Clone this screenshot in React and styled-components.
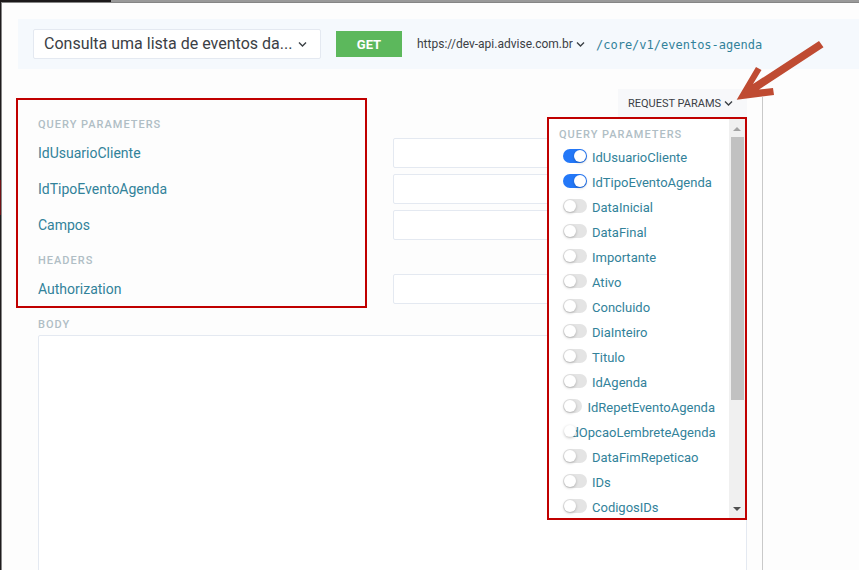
import React, { useState } from "react";
import styled, { createGlobalStyle } from "styled-components";

const GlobalStyle = createGlobalStyle`
  *, *::before, *::after { box-sizing: border-box; }
  body { margin: 0; font-family: Roboto, "Liberation Sans", sans-serif; color: #3b4045; }
  button, input, select, textarea { font: inherit; color: inherit; margin: 0; }
`;

const Backdrop = styled.div`
  display: flex;
  height: 100vh;
  overflow: hidden;
  padding: 2px 0 0 1px;
  background:
    linear-gradient(90deg, #1c191a 111px, #999 111px) top / 100% 2px no-repeat,
    linear-gradient(#1f1c1d 180px, #6e1014 180px 215px, #1f1c1d 215px);
`;

const Dialog = styled.div`
  flex: 1;
  min-width: 0;
  display: flex;
  flex-direction: column;
  padding: 16px 0 0 16px;
  border: solid #858585;
  border-width: 1px 0 0 1px;
  background: #fdfdfd;
`;

const RequestBar = styled.header`
  display: flex;
  align-items: center;
  flex: none;
  height: 50px;
  padding-left: 15px;
  background: #f5f9fd;
`;

const SelectWrap = styled.div`
  display: flex;
  align-items: center;
  flex: none;
  gap: 2px;
`;

const EndpointWrap = styled(SelectWrap)`
  width: 288px;
  height: 30px;
  padding: 0 12px 0 10px;
  border: 1px solid #e4e9f1;
  border-radius: 2px;
  background: #fff;
`;

const PlainSelect = styled.select`
  appearance: none;
  flex: 1;
  min-width: 0;
  padding: 0;
  border: 0;
  outline: 0;
  background: transparent;
  font-size: ${(p) => p.$size}px;
  line-height: 20px;
`;

const Method = styled.button`
  flex: none;
  width: 66px;
  height: 26px;
  margin: 0 15px;
  padding: 0;
  border: 0;
  background: #5cb85c;
  color: #fff;
  font-size: 13px;
  font-weight: 700;
`;

const Path = styled.code`
  margin: 2px 0 0 10px;
  color: #32829a;
  font: 12px "DejaVu Sans Mono", monospace;
`;

const Columns = styled.div`
  flex: 1;
  min-height: 0;
  display: grid;
  grid-template-columns: minmax(0, 1fr) 97px;
  padding-top: 20px;
`;

const Form = styled.main`
  position: relative;
  min-width: 0;
  padding: 0 15px 0 20px;
`;

const Response = styled.aside`
  margin-top: 8px;
  border-left: 1px solid #c9c9c9;
`;

const FormTop = styled.div`
  display: flex;
  justify-content: space-between;
  align-items: flex-start;
  height: 42px;
`;

const Heading = styled.h2`
  margin: 0;
  padding-top: ${(p) => p.$top || 0}px;
  color: #b0bec5;
  font-size: 11px;
  font-weight: 500;
  line-height: 12px;
  letter-spacing: 1px;
  text-transform: uppercase;
`;

const Fields = styled.div`
  display: grid;
  gap: 6px;
  padding-top: 7px;
`;

const Field = styled.label`
  display: grid;
  grid-template-columns: 1fr 1fr;
  align-items: center;
  color: #32829a;
  font-size: 14px;
`;

const TextBox = styled.input`
  width: 100%;
  height: 30px;
  padding: 0 8px;
  border: 1px solid #e4e9f1;
  border-radius: 2px;
  background: #fff;
`;

const Body = styled.textarea`
  display: block;
  width: 100%;
  height: 300px;
  margin-top: 4px;
  border: 1px solid #e4e9f1;
  border-radius: 2px;
  background: #fff;
  resize: none;
`;

const Highlight = styled.div`
  position: absolute;
  top: 9px;
  left: -2px;
  width: calc(50% - 21px);
  height: 210px;
  border: 2px solid #c00000;
  pointer-events: none;
`;

const Menu = styled.div`
  position: relative;
  width: 129px;
`;

const MenuButton = styled.button`
  display: flex;
  align-items: center;
  gap: 2px;
  width: 100%;
  height: 28px;
  padding: 0 0 0 10px;
  border: 0;
  background: #f7f8fa;
  font-size: 11px;
  white-space: nowrap;
`;

const Popover = styled.div`
  position: absolute;
  z-index: 1;
  top: 100%;
  right: 0;
  display: flex;
  width: 200px;
  height: 403px;
  border: 2px solid #c00000;
  background: #fff;
`;

const ParamList = styled.div`
  flex: 1;
  min-width: 0;
  overflow-y: auto;
  scrollbar-width: none;
  padding: 10px 14px 0 10px;
`;

const Params = styled.ul`
  list-style: none;
  margin: 4px 0 0;
  padding: 0 0 0 4px;
`;

const Param = styled.label`
  display: flex;
  align-items: center;
  gap: 5px;
  height: 25px;
  color: #32829a;
  font-size: 13px;
`;

const Switch = styled.input`
  appearance: none;
  position: relative;
  flex: 0 1 24px;
  min-width: 0;
  height: 14px;
  margin-bottom: 3px;
  border-radius: 7px;
  background: #e4e4e4;

  &::before {
    content: "";
    position: absolute;
    top: 1px;
    left: 1px;
    width: 12px;
    height: 12px;
    border-radius: 50%;
    background: #fff;
    box-shadow: 0 1px 3px rgba(0, 0, 0, 0.25);
  }
  &:checked { background: #2478f8; }
  &:checked::before { left: auto; right: 1px; }
`;

const ScrollBar = styled.div`
  display: flex;
  flex-direction: column;
  align-items: center;
  flex: none;
  width: 16px;
  background: #f0f0f0;
`;

const ScrollArrow = styled.svg`
  flex: none;
  width: 16px;
  height: 18px;
`;

const ScrollTrack = styled.div`
  flex: 1;
  width: 13px;
`;

const ScrollThumb = styled.div`
  height: 263px;
  background: #c1c1c1;
`;

const Pointer = styled.svg`
  position: absolute;
  z-index: 2;
  top: -49px;
  right: -77px;
  width: 88px;
  height: 61px;
  pointer-events: none;
`;

const ChevronSvg = styled.svg`
  flex: none;
  width: 11px;
  height: 10px;
  pointer-events: none;
`;

const Chevron = () => (
  <ChevronSvg viewBox="0 0 11 10" fill="none" stroke="#3b4045" strokeWidth="1.4" aria-hidden="true">
    <path d="M2 3.5 5.5 7 9 3.5" />
  </ChevronSvg>
);

const queryFields = ["IdUsuarioCliente", "IdTipoEventoAgenda", "Campos"];
const params = [
  "IdUsuarioCliente", "IdTipoEventoAgenda", "DataInicial", "DataFinal", "Importante",
  "Ativo", "Concluido", "DiaInteiro", "Titulo", "IdAgenda", "IdRepetEventoAgenda",
  "IdOpcaoLembreteAgenda", "DataFimRepeticao", "IDs", "CodigosIDs",
];

function TextField({ name }) {
  return (
    <Field>
      {name}
      <TextBox type="text" name={name} />
    </Field>
  );
}

function ParamsMenu() {
  const [open, setOpen] = useState(true);
  const [enabled, setEnabled] = useState(params.slice(0, 2));
  const toggle = (name) =>
    setEnabled((now) => (now.includes(name) ? now.filter((n) => n !== name) : [...now, name]));

  return (
    <Menu>
      <MenuButton type="button" aria-expanded={open} onClick={() => setOpen(!open)}>
        REQUEST PARAMS <Chevron />
      </MenuButton>
      {open && (
        <Popover>
          <ParamList>
            <Heading>Query Parameters</Heading>
            <Params>
              {params.map((name) => (
                <li key={name}>
                  <Param>
                    <Switch type="checkbox" checked={enabled.includes(name)} onChange={() => toggle(name)} />
                    {name}
                  </Param>
                </li>
              ))}
            </Params>
          </ParamList>
          <ScrollBar aria-hidden="true">
            <ScrollArrow viewBox="0 0 16 18"><path d="M4 12 8 8l4 4z" fill="#a3a3a3" /></ScrollArrow>
            <ScrollTrack><ScrollThumb /></ScrollTrack>
            <ScrollArrow viewBox="0 0 16 18"><path d="m4 7 4 4 4-4z" fill="#505050" /></ScrollArrow>
          </ScrollBar>
        </Popover>
      )}
      <Pointer viewBox="736 40 88 61" aria-hidden="true">
        <path d="M736.7 99.7 756 67l5.5 3-8.5 14L819 41l4.5 6.2L759 89.5 773 88l1 7z" fill="#bf4b32" />
      </Pointer>
    </Menu>
  );
}

export default function App() {
  return (
    <Backdrop>
      <GlobalStyle />
      <Dialog>
        <RequestBar>
          <EndpointWrap>
            <PlainSelect $size={16} aria-label="Endpoint">
              <option>Consulta uma lista de eventos da...</option>
            </PlainSelect>
            <Chevron />
          </EndpointWrap>
          <Method type="button">GET</Method>
          <SelectWrap>
            <PlainSelect $size={12} aria-label="Host">
              <option>https://dev-api.advise.com.br</option>
            </PlainSelect>
            <Chevron />
          </SelectWrap>
          <Path>/core/v1/eventos-agenda</Path>
        </RequestBar>
        <Columns>
          <Form>
            <FormTop>
              <Heading $top={30}>Query Parameters</Heading>
              <ParamsMenu />
            </FormTop>
            <Fields>
              {queryFields.map((name) => <TextField key={name} name={name} />)}
            </Fields>
            <Heading $top={15}>Headers</Heading>
            <Fields>
              <TextField name="Authorization" />
            </Fields>
            <Heading $top={15}>
              <label htmlFor="body">Body</label>
            </Heading>
            <Body id="body" />
            <Highlight />
          </Form>
          <Response />
        </Columns>
      </Dialog>
    </Backdrop>
  );
}
